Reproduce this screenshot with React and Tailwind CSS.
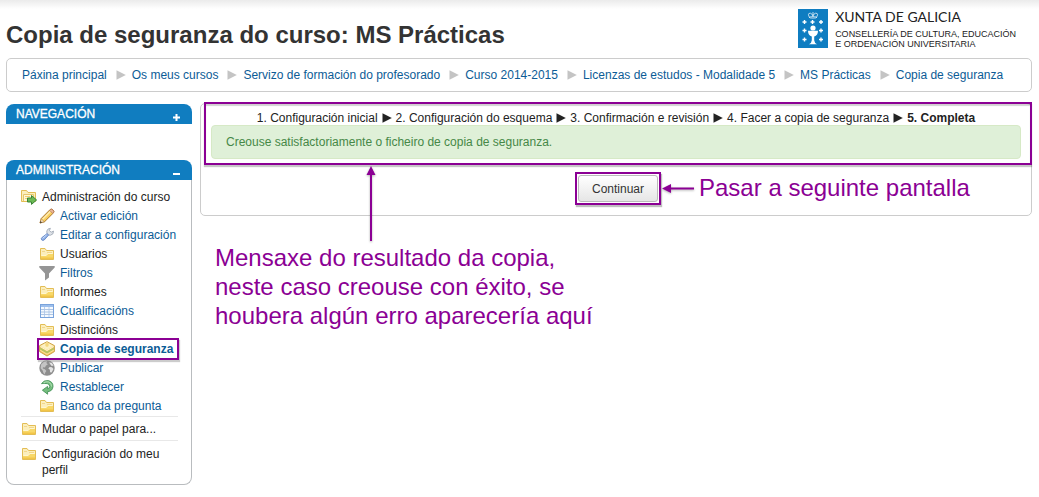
import React from "react";

function Triangle({ className }) {
  return (
    <svg viewBox="0 0 10 10" className={`h-[10px] w-[10px] shrink-0 ${className}`} aria-hidden="true">
      <path d="M0.5 0.3 L9.8 5 L0.5 9.7 Z" fill="currentColor" />
    </svg>
  );
}

function Icon({ children }) {
  return (
    <svg viewBox="0 0 16 16" className="h-4 w-4 shrink-0" aria-hidden="true">
      {children}
    </svg>
  );
}

function FolderIcon() {
  return (
    <Icon>
      <path d="M1.5 13.5 V2.5 H6 L7.5 4.5 H14.5 V13.5 Z" fill="#fbeebc" stroke="#e3bd55" />
      <path d="M3 5.5 H6 M8 6.5 H13" stroke="#f2d68a" />
      <path d="M2 13 V9.5 H7.2 L9 7.5 H14 V13 Z" fill="#f8d868" />
      <path d="M2 13 V11.5 H14 V13 Z" fill="#f2c548" />
      <path d="M2.2 9.5 H7.2 L9 7.5 H13.8" fill="none" stroke="#fff6cf" />
    </Icon>
  );
}

function CourseAdminIcon() {
  return (
    <Icon>
      <path d="M0.5 12.5 V1.5 H5.5 L7 3.5 H14.5 V12.5 Z" fill="#fbeebc" stroke="#e3bd55" />
      <path d="M2.5 12 V5.5 H12.5 V12" fill="#fef7da" stroke="#e6c66c" />
      <path d="M4 7.5 H9 M4 9.5 H6" stroke="#f2cf70" />
      <path d="M6.5 9 H10.5 V6.5 L15.6 11 L10.5 15.4 V13 H6.5 Z" fill="#6cba55" stroke="#3b8535" strokeLinejoin="round" />
    </Icon>
  );
}

function PencilIcon() {
  return (
    <Icon>
      <path d="M1 15 L2.3 10.4 L11.2 1.5 Q12.6 0.5 14 2 Q15.5 3.4 14.5 4.8 L5.6 13.7 Z" fill="#f9cf5e" stroke="#ab762c" strokeLinejoin="round" />
      <path d="M3.6 11.2 L11.8 3" stroke="#fdeab2" strokeWidth="1.5" />
      <path d="M10.6 2.3 L13.7 5.4 L14.6 4.6 Q15.4 3.4 14 2 Q12.6 0.6 11.3 1.5 Z" fill="#ecb99c" stroke="#b06f4f" strokeWidth="0.7" />
      <path d="M1 15 L2.3 10.8 L5.2 13.7 Z" fill="#f4e3c8" stroke="#ab762c" strokeWidth="0.5" />
      <path d="M1 15 L1.6 13 L3 14.4 Z" fill="#333" />
    </Icon>
  );
}

function WrenchIcon() {
  return (
    <Icon>
      <path
        d="M8 6.6 L7.8 4 Q8.5 1.4 11.4 1.3 L10.4 3.6 L12.2 5.2 L14.5 4.1 Q14.8 7.5 11.5 8.2 L9.6 8 Z"
        fill="#dfe3e8"
        stroke="#a0a9b5"
        strokeWidth="0.9"
        strokeLinejoin="round"
      />
      <path d="M8.2 6.6 L9.6 8.1 L5.2 13 Q3.6 13.9 2.6 12.8 Q1.8 11.6 2.9 10.6 Z" fill="#8fb1e8" stroke="#6486c4" strokeWidth="0.9" />
      <path d="M3.6 11.4 L7.6 7.8" stroke="#d3e2fb" strokeWidth="0.9" />
    </Icon>
  );
}

function FilterIcon() {
  return (
    <Icon>
      <path d="M0.3 1 H15.7 V2.4 L10 8.6 V12.6 L6 15.6 V8.6 L0.3 2.4 Z" fill="#959595" />
    </Icon>
  );
}

function GradesIcon() {
  return (
    <Icon>
      <rect x="1.5" y="1.5" width="13" height="13" fill="#f6faff" stroke="#79a3dc" />
      <rect x="2" y="2" width="12" height="2" fill="#9dbfec" />
      <path d="M2 6.5 H14 M2 9 H14 M2 11.5 H14" stroke="#9db9dc" strokeWidth="0.8" />
      <path d="M5.5 4 V14 M10 4 V14" stroke="#a9c4e8" strokeWidth="0.8" />
    </Icon>
  );
}

function BackupIcon() {
  return (
    <Icon>
      <path d="M8 0.7 L15.4 4.6 V10.6 L8 15 L0.6 10.6 V4.6 Z" fill="#f1c75a" stroke="#c79a3c" strokeWidth="0.9" strokeLinejoin="round" />
      <path d="M8 1.3 L14.8 4.9 L8 8.9 L1.2 4.9 Z" fill="#fcf0c2" />
      <path d="M8 1.3 L9.6 2.2 V5 L8 6 L6.4 5 V2.2 Z" fill="#f4d77c" />
      <path d="M1.2 6.4 L8 10.4 L14.8 6.4 V8.4 L8 12.4 L1.2 8.4 Z" fill="#b4c463" />
      <path d="M1.2 5.5 L8 9.5 L14.8 5.5" fill="none" stroke="#fff6d5" />
      <path d="M1.2 9.2 L8 13.2 L14.8 9.2" fill="none" stroke="#f9e29a" />
    </Icon>
  );
}

function GlobeIcon() {
  return (
    <Icon>
      <circle cx="8" cy="8" r="7.7" fill="#8d8d8d" />
      <path d="M2.2 4.2 L5 1.8 L8.2 1.3 L7.3 3 L8.9 4.3 L6.8 5.7 L6 7.4 L4 7.2 L3.8 8.6 L5.9 9.2 L7.4 11 L6.2 12.6 L5.9 14.6 Q4 13 3.6 10.6 L1.6 8.2 Z" fill="#c4c4c4" />
      <path d="M10 2.5 L12.6 2.7 L14.7 5.6 L12.7 6 L11.6 4.7 Z M10.7 7 L13 7.2 L14.5 9 L12.6 12.5 L11 12.2 L10.9 9.8 L9.3 8.4 Z" fill="#e4e4e4" />
    </Icon>
  );
}

function RestoreIcon() {
  return (
    <Icon>
      <path
        d="M2.5 4.6 Q5 1 9.3 1.6 Q14 2.8 14 7.4 Q13.6 12.2 8.6 12.7 V15.2 L3.4 11.2 L8.6 7.4 V9.8 Q10.8 9.3 10.8 7.4 Q10.6 5 8.2 4.6 Q5.6 4.3 2.5 4.6 Z"
        fill="#74bd7d"
        stroke="#46935a"
        strokeWidth="0.9"
        strokeLinejoin="round"
      />
      <path d="M4.4 3.9 Q7 2.3 9.4 2.9 Q12.7 4 12.6 7.6" fill="none" stroke="#b9e2bc" strokeWidth="0.9" />
    </Icon>
  );
}

function XuntaEmblem() {
  const stars = [
    [6.5, 13], [14.5, 13], [23, 13],
    [6.5, 21.5], [23, 21.5],
    [6.5, 30.5], [23, 30.5],
  ];
  return (
    <svg viewBox="0 0 30 39" className="h-[39px] w-[30px] shrink-0" role="img" aria-label="Xunta de Galicia">
      <rect width="30" height="39" fill="#0f7dc1" />
      <g fill="none" stroke="#fff" strokeWidth="0.7">
        <path d="M11.5 8.6 L10.4 5.8 Q10.4 4 12.4 4.2 Q14.2 4.6 14.8 6.8 M18.4 8.6 L19.6 5.8 Q19.6 4 17.6 4.2 Q15.8 4.6 15 6.8 M15 3 V7.8" />
        <ellipse cx="15" cy="8.4" rx="3.7" ry="0.7" />
      </g>
      {stars.map(([x, y]) => (
        <path
          key={`${x}-${y}`}
          d={`M${x - 2} ${y} H${x + 2} M${x} ${y - 2} V${y + 2}`}
          stroke="#fff"
          strokeWidth="1.4"
        />
      ))}
      <circle cx="15" cy="19" r="2.6" fill="#fff" />
      <path d="M10 21.8 H20 Q20 26.4 16.2 27.4 V31.2 Q16.4 34 19 35.2 H11 Q13.6 34 13.8 31.2 V27.4 Q10 26.4 10 21.8 Z" fill="#fff" />
    </svg>
  );
}

const crumbs = [
  "Páxina principal",
  "Os meus cursos",
  "Servizo de formación do profesorado",
  "Curso 2014-2015",
  "Licenzas de estudos - Modalidade 5",
  "MS Prácticas",
  "Copia de seguranza",
];

const steps = [
  "1. Configuración inicial",
  "2. Configuración do esquema",
  "3. Confirmación e revisión",
  "4. Facer a copia de seguranza",
  "5. Completa",
];

const courseItems = [
  { label: "Activar edición", icon: PencilIcon, link: true },
  { label: "Editar a configuración", icon: WrenchIcon, link: true },
  { label: "Usuarios", icon: FolderIcon },
  { label: "Filtros", icon: FilterIcon, link: true },
  { label: "Informes", icon: FolderIcon },
  { label: "Cualificacións", icon: GradesIcon, link: true },
  { label: "Distincións", icon: FolderIcon },
  { label: "Copia de seguranza", icon: BackupIcon, link: true, current: true },
  { label: "Publicar", icon: GlobeIcon, link: true },
  { label: "Restablecer", icon: RestoreIcon, link: true },
  { label: "Banco da pregunta", icon: FolderIcon, link: true },
];

function BlockHeader({ title, open }) {
  return (
    <div className="flex h-5 items-center justify-between rounded-t-lg bg-[#107dc0] pr-3 pl-[10px] text-white">
      <h2 className="text-xs [-webkit-text-stroke:0.3px_white]">{title}</h2>
      <button type="button" aria-expanded={open} aria-label={title} className="flex h-4 w-[7px] items-end pb-px">
        <svg viewBox="0 0 7 7" className="h-[7px] w-[7px]" aria-hidden="true">
          <path d={open ? "M0 4 H7" : "M0 3.5 H7 M3.5 0 V7"} stroke="#fff" strokeWidth="2" />
        </svg>
      </button>
    </div>
  );
}

function CourseItem({ item }) {
  const ItemIcon = item.icon;
  return (
    <li className="relative flex h-[19px] items-center gap-[5px] whitespace-nowrap">
      <ItemIcon />
      {item.link ? (
        <a href="#" className={item.current ? "font-bold text-[#0c5c96]" : "text-[#0c5c96]"}>
          {item.label}
        </a>
      ) : (
        <span>{item.label}</span>
      )}
      {item.current && (
        <span className="pointer-events-none absolute -inset-x-[2px] -top-px -bottom-[2px] border-2 border-[#8b0094] shadow-[1px_2px_1px_rgba(0,0,0,0.2)]" />
      )}
    </li>
  );
}

function Sidebar() {
  return (
    <aside className="w-[186px] shrink-0">
      <section className="mb-9 pt-px">
        <BlockHeader title="NAVEGACIÓN" open={false} />
      </section>
      <section>
        <BlockHeader title="ADMINISTRACIÓN" open />
        <div className="rounded-b-lg border border-t-0 border-[#b9bcbf] pt-[7px] pr-[13px] pb-[6px] pl-[14px]">
          <div className="flex h-[19px] items-center gap-[5px]">
            <CourseAdminIcon />
            <span>Administración do curso</span>
          </div>
          <ul className="pr-px pb-px pl-[18px]">
            {courseItems.map((item) => (
              <CourseItem key={item.label} item={item} />
            ))}
          </ul>
          <div className="flex h-6 items-center gap-[5px] border-t border-[#e8e8e8] pt-px">
            <FolderIcon />
            <span>Mudar o papel para...</span>
          </div>
          <div className="flex items-start gap-[5px] border-t border-[#e8e8e8] pt-[5px] leading-4">
            <FolderIcon />
            <span>Configuración do meu perfil</span>
          </div>
        </div>
      </section>
    </aside>
  );
}

function BackupResult() {
  return (
    <div className="relative rounded-[5px] border border-[#ccc] px-[10px] pt-[6px] pb-[13px]">
      <div className="pointer-events-none absolute -top-[2px] -right-px left-[3px] h-[63px] border-2 border-[#8b0094] shadow-[0_2px_1px_rgba(0,0,0,0.22),inset_0_2px_1px_rgba(0,0,0,0.18)]" />
      <ol className="flex h-[15px] items-center justify-center gap-1">
        {steps.map((step, i) => (
          <li key={step} className={i === steps.length - 1 ? "flex items-center gap-1 font-bold" : "flex items-center gap-1"}>
            {i > 0 && <Triangle className="text-[#222]" />}
            {step}
          </li>
        ))}
      </ol>
      <p role="status" className="mb-4 rounded border border-[#d6e9c6] bg-[#dff0d8] px-[14px] py-2 leading-4 text-[#468847]">
        Creouse satisfactoriamente o ficheiro de copia de seguranza.
      </p>
      <div className="flex justify-center pl-1">
        <div className="relative">
          <button
            type="button"
            className="block h-[27px] rounded-[3px] border border-[#bbb] bg-linear-to-b from-white to-[#e6e6e6] px-[13px] text-[#333]"
          >
            Continuar
          </button>
          <span className="pointer-events-none absolute -inset-x-[3px] -inset-y-[3px] border-2 border-[#8b0094] shadow-[1px_2px_1px_rgba(0,0,0,0.25)]" />
          <div className="absolute top-1/2 left-full ml-1 flex -translate-y-1/2 items-center gap-[5px] text-2xl leading-[29px] whitespace-nowrap text-[#8b0094]">
            <svg viewBox="0 0 32 10" className="h-[10px] w-8 drop-shadow-[0_1px_1px_rgba(0,0,0,0.3)]" aria-hidden="true">
              <path d="M0 5 L9 0.5 V9.5 Z M8 4 H32 V6 H8 Z" fill="currentColor" />
            </svg>
            <span className="pb-1">Pasar a seguinte pantalla</span>
          </div>
        </div>
      </div>
      <svg viewBox="0 0 10 76" className="absolute top-[62px] left-[165px] h-[76px] w-[10px] text-[#8b0094] drop-shadow-[0_1px_1px_rgba(0,0,0,0.3)]" aria-hidden="true">
        <path d="M5 0 L9.5 9 H0.5 Z M4 8 H6 V75 H4 Z" fill="currentColor" />
      </svg>
    </div>
  );
}

export default function App() {
  return (
    <div className="bg-white bg-[linear-gradient(#ebebeb,#ffffff_9px)] pr-[7px] pb-3 pl-[6px] font-['Liberation_Sans',Arial,sans-serif] text-xs text-[#222]">
      <header className="flex items-start justify-between pt-[9px] pr-4">
        <h1 className="pt-3 text-2xl leading-7 font-bold text-[#333]">Copia de seguranza do curso: MS Prácticas</h1>
        <div className="flex gap-[7px] text-[#222]">
          <XuntaEmblem />
          <div>
            <div className="font-['Lato',sans-serif] text-sm leading-4">XUNTA DE GALICIA</div>
            <div className="mt-1 text-[9px] leading-[10px]">
              CONSELLERÍA DE CULTURA, EDUCACIÓN
              <br />E ORDENACIÓN UNIVERSITARIA
            </div>
          </div>
        </div>
      </header>

      <nav aria-label="Ruta" className="mt-[9px] rounded-[5px] border border-[#ccc] px-[15px] py-2">
        <ol className="flex flex-wrap items-center leading-4">
          {crumbs.map((crumb, i) => (
            <li key={crumb} className="flex items-center">
              {i > 0 && <Triangle className="mr-[6px] ml-[9px] text-[#c4c4c4]" />}
              <a href="#" className="text-[#0c5c96]">
                {crumb}
              </a>
            </li>
          ))}
        </ol>
      </nav>

      <div className="mt-[11px] flex items-start gap-2">
        <Sidebar />
        <main className="min-w-0 flex-1">
          <BackupResult />
          <p className="mt-[27px] ml-[15px] max-w-[400px] text-2xl leading-[29px] text-[#8b0094]">
            Mensaxe do resultado da copia, neste caso creouse con éxito, se houbera algún erro aparecería aquí
          </p>
        </main>
      </div>
    </div>
  );
}
